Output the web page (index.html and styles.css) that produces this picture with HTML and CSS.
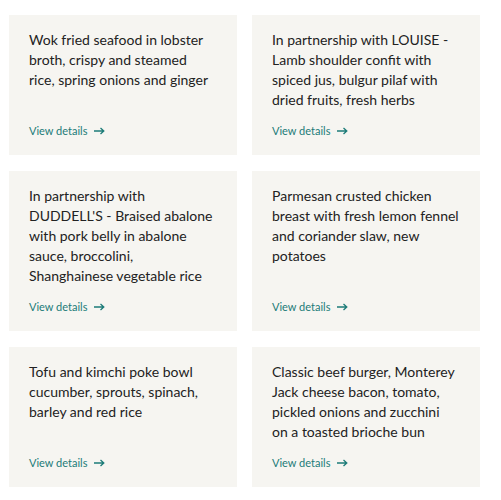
FILE: index.html
```html
<!DOCTYPE html>
<html>
<head>
<meta charset="utf-8">
<link rel="stylesheet" href="styles.css">
</head>
<body>
<div class="grid">
  <div class="card">
    <p class="title">Wok fried seafood in lobster<br>broth, crispy and steamed<br>rice, spring onions and ginger</p>
    <a class="link" href="#">View details <span class="arrow"><svg width="11" height="8" viewBox="0 0 11 8"><path d="M0 4H9.5M6.5 1L9.8 4L6.5 7" fill="none" stroke="currentColor" stroke-width="1.3"/></svg></span></a>
  </div>
  <div class="card">
    <p class="title">In partnership with LOUISE -<br>Lamb shoulder confit with<br>spiced jus, bulgur pilaf with<br>dried fruits, fresh herbs</p>
    <a class="link" href="#">View details <span class="arrow"><svg width="11" height="8" viewBox="0 0 11 8"><path d="M0 4H9.5M6.5 1L9.8 4L6.5 7" fill="none" stroke="currentColor" stroke-width="1.3"/></svg></span></a>
  </div>
  <div class="card">
    <p class="title">In partnership with<br>DUDDELL'S - Braised abalone<br>with pork belly in abalone<br>sauce, broccolini,<br>Shanghainese vegetable rice</p>
    <a class="link" href="#">View details <span class="arrow"><svg width="11" height="8" viewBox="0 0 11 8"><path d="M0 4H9.5M6.5 1L9.8 4L6.5 7" fill="none" stroke="currentColor" stroke-width="1.3"/></svg></span></a>
  </div>
  <div class="card">
    <p class="title">Parmesan crusted chicken<br>breast with fresh lemon fennel<br>and coriander slaw, new<br>potatoes</p>
    <a class="link" href="#">View details <span class="arrow"><svg width="11" height="8" viewBox="0 0 11 8"><path d="M0 4H9.5M6.5 1L9.8 4L6.5 7" fill="none" stroke="currentColor" stroke-width="1.3"/></svg></span></a>
  </div>
  <div class="card">
    <p class="title">Tofu and kimchi poke bowl<br>cucumber, sprouts, spinach,<br>barley and red rice</p>
    <a class="link" href="#">View details <span class="arrow"><svg width="11" height="8" viewBox="0 0 11 8"><path d="M0 4H9.5M6.5 1L9.8 4L6.5 7" fill="none" stroke="currentColor" stroke-width="1.3"/></svg></span></a>
  </div>
  <div class="card">
    <p class="title">Classic beef burger, Monterey<br>Jack cheese bacon, tomato,<br>pickled onions and zucchini<br>on a toasted brioche bun</p>
    <a class="link" href="#">View details <span class="arrow"><svg width="11" height="8" viewBox="0 0 11 8"><path d="M0 4H9.5M6.5 1L9.8 4L6.5 7" fill="none" stroke="currentColor" stroke-width="1.3"/></svg></span></a>
  </div>
</div>
</body>
</html>
```
FILE: styles.css
```css
html, body {
  margin: 0;
  padding: 0;
  background: #ffffff;
}
body {
  font-family: "Lato", "Liberation Sans", sans-serif;
  padding: 15px 0 0 9px;
}
.grid {
  width: 471px;
  display: grid;
  grid-template-columns: 228px 228px;
  column-gap: 15px;
  row-gap: 16px;
}
.card {
  background: #f6f5f1;
  padding: 15px 20px 16px 20px;
  display: flex;
  flex-direction: column;
}
.title {
  margin: 0 0 13px 0;
  font-size: 14px;
  line-height: 20px;
  color: #222222;
  white-space: nowrap;
}
.link {
  margin-top: auto;
  font-size: 11px;
  line-height: 16px;
  color: #1c7b78;
  text-decoration: none;
  display: flex;
  align-items: center;
}
.arrow {
  display: inline-flex;
  margin-left: 7px;
}
```
